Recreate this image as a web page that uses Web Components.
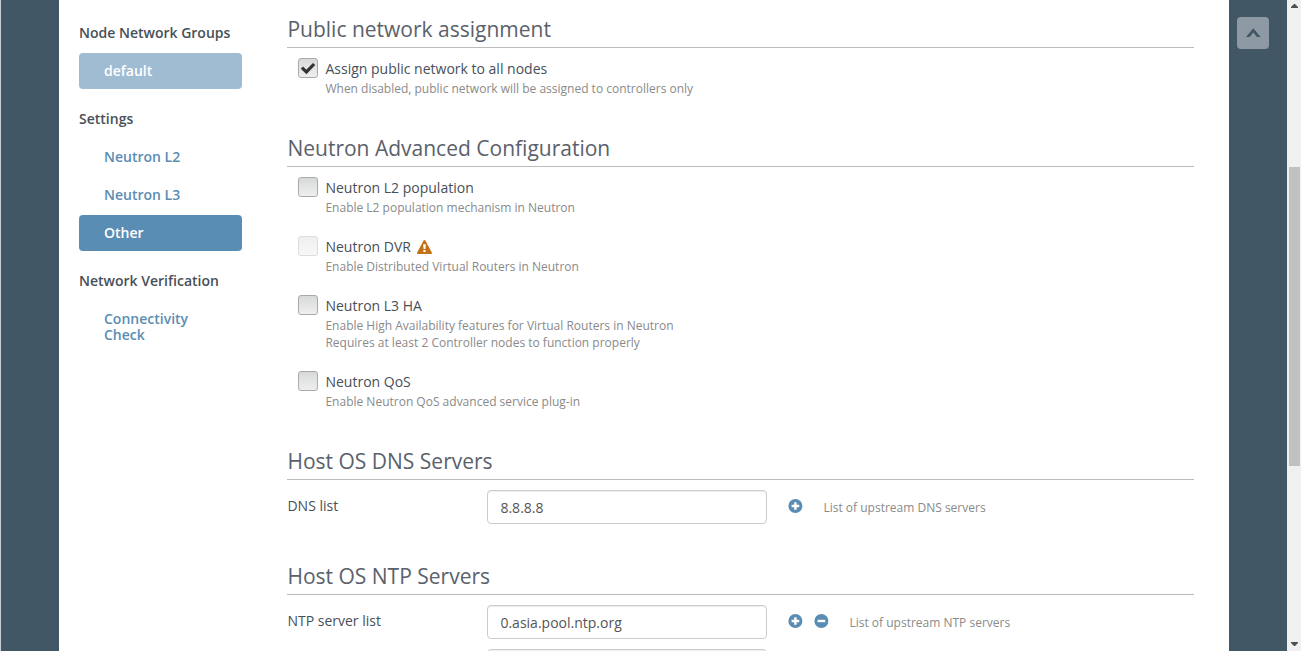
<!DOCTYPE html>
<html lang="en">
<head>
<meta charset="utf-8">
<title>Network settings</title>
<style>
html, body { margin: 0; height: 100%; overflow: hidden; background: #fff; }
body { font: 14px/20px "Open Sans", sans-serif; color: #415766; }
</style>
</head>
<body>
<app-shell>
  <side-nav slot="nav">
    <nav-group label="Node Network Groups"><nav-link state="soft">default</nav-link></nav-group>
    <nav-group label="Settings"><nav-link>Neutron L2</nav-link><nav-link>Neutron L3</nav-link><nav-link state="active">Other</nav-link></nav-group>
    <nav-group label="Network Verification"><nav-link>Connectivity Check</nav-link></nav-group>
  </side-nav>
  <settings-section label="Public network assignment">
    <check-item checked label="Assign public network to all nodes">When disabled, public network will be assigned to controllers only</check-item>
  </settings-section>
  <settings-section label="Neutron Advanced Configuration">
    <check-item label="Neutron L2 population">Enable L2 population mechanism in Neutron</check-item>
    <check-item disabled warning label="Neutron DVR">Enable Distributed Virtual Routers in Neutron</check-item>
    <check-item label="Neutron L3 HA">Enable High Availability features for Virtual Routers in Neutron<br>Requires at least 2 Controller nodes to function properly</check-item>
    <check-item label="Neutron QoS">Enable Neutron QoS advanced service plug-in</check-item>
  </settings-section>
  <settings-section label="Host OS DNS Servers">
    <field-row label="DNS list" value="8.8.8.8"><round-icon slot="icons" kind="plus"></round-icon>List of upstream DNS servers</field-row>
  </settings-section>
  <settings-section label="Host OS NTP Servers">
    <field-row class="tight" label="NTP server list" value="0.asia.pool.ntp.org"><round-icon slot="icons" kind="plus"></round-icon><round-icon slot="icons" kind="minus"></round-icon>List of upstream NTP servers</field-row>
    <field-row label="" value=""></field-row>
  </settings-section>
  <to-top slot="right"></to-top>
  <scroll-rail slot="rail"></scroll-rail>
</app-shell>
<script>
function define(name, render) {
  customElements.define(name, class extends HTMLElement {
    constructor() {
      super();
      this.attachShadow({ mode: 'open' }).innerHTML = render(this);
    }
  });
}

define('app-shell', () => `
<style>
:host { display: grid; grid-template-columns: 59px 1170px 58px 14px; height: 651px; overflow: hidden; background: #415766; }
.left { border-left: 1px solid #c9cdd0; }
.page { background: #fff; display: grid; grid-template-columns: 163px 907px; column-gap: 45.45px; padding-left: 20px; height: 651px; overflow: hidden; box-sizing: border-box; align-items: start; }
.main { margin-top: -2px; }
</style>
<div class="left"></div>
<div class="page"><slot name="nav"></slot><div class="main"><slot></slot></div></div>
<slot name="right"></slot><slot name="rail"></slot>`);

define('side-nav', () => `
<style>:host { display: flex; flex-direction: column; gap: 20px; padding-top: 23px; }</style><slot></slot>`);

define('nav-group', el => `
<style>
:host { display: block; font-weight: 600; }
.t { color: #474f58; line-height: 20px; margin-bottom: 10px; }
.links { display: flex; flex-direction: column; gap: 2px; }
</style>
<div class="t">${el.getAttribute('label')}</div><div class="links"><slot></slot></div>`);

define('nav-link', () => `
<style>
:host { display: block; box-sizing: border-box; min-height: 36px; padding: 10px 25px; line-height: 16px; border-radius: 4px; color: #5a8db4; font-weight: 600; }
:host([state=soft]) { background: #a0bcd2; color: #fff; }
:host([state=active]) { background: #5a8db4; color: #fff; }
</style><slot></slot>`);

define('settings-section', el => `
<style>
:host { display: block; }
h3 { margin: 0 0 10px; height: 31px; border-bottom: 1px solid #bcbcbc; font-weight: 400; font-size: 21px; line-height: 26px; padding-top: 18px; color: #5a616b; }
</style><h3>${el.getAttribute('label')}</h3><slot></slot>`);

define('check-item', el => `
<style>
:host { display: grid; grid-template-columns: 20px 1fr; column-gap: 7px; margin-left: 11px; padding-bottom: 20px; }
.box { width: 18px; height: 18px; border: 1px solid #aaa; border-radius: 3px; background: linear-gradient(#d7d9d9, #efefef); }
:host([disabled]) .box { border-color: #ddd; background: linear-gradient(#efefef, #f8f8f8); }
.box svg { display: block; }
.t { line-height: 22px; height: 22px; display: flex; align-items: center; gap: 6px; color: #474f58; }
.d { font-size: 12px; line-height: 17px; color: #8a8a8a; }
</style>
<div class="box">${el.hasAttribute('checked') ? '<svg width="18" height="18"><path d="M2.9 8.6L7.4 12.9L15.1 5" fill="none" stroke="#333" stroke-width="3.2"/></svg>' : ''}</div>
<div><div class="t"><span>${el.getAttribute('label')}</span>${el.hasAttribute('warning') ? '<svg width="15" height="14" viewBox="0 0 15 14"><path d="M7.5 0Q8 0 8.4.6L14.8 12.5Q15.2 14 14 14H1Q-.2 14 .2 12.5L6.6.6Q7 0 7.5 0Z" fill="#c17116"/><path d="M6.1 4.2H8.9L8.4 9H6.6ZM6.4 10H8.6V12.1H6.4Z" fill="#fff"/></svg>' : ''}</div>
<div class="d"><slot></slot></div></div>`);

define('field-row', el => `
<style>
:host { display: grid; grid-template-columns: 200px 280px auto 1fr; height: 34px; margin-bottom: 21px; color: #474f58; }
:host(.tight) { margin-bottom: 10px; }
.l { line-height: 20px; padding-top: 6px; }
.i { box-sizing: border-box; height: 34px; border: 1px solid #ccc; border-radius: 4px; padding: 7px 12px 0; line-height: 20px; color: #555; box-shadow: inset 0 1px 1px rgba(0,0,0,.075); }
.b { display: flex; gap: 12px; padding: 9px 21px 0; align-items: flex-start; }
.d { font-size: 12px; line-height: 17px; padding-top: 9px; color: #8a8a8a; }
</style>
<div class="l">${el.getAttribute('label')}</div><div class="i" role="textbox">${el.getAttribute('value')}</div>
<div class="b"><slot name="icons"></slot></div><div class="d"><slot></slot></div>`);

define('round-icon', el => `
<style>:host { display: block; width: 14px; height: 14px; } svg { display: block; overflow: visible; }</style>
<svg width="14" height="14"><circle cx="7.4" cy="7" r="7" fill="#5a8db4"/><path d="${el.getAttribute('kind') === 'plus' ? 'M3.6 7H11.2M7.4 3.2V10.8' : 'M3.6 7H11.2'}" stroke="#fff" stroke-width="2.4"/></svg>`);

define('to-top', () => `
<style>
:host { display: block; padding: 17px 0 0 8.4px; }
.b { width: 32px; height: 32px; border-radius: 4px; background: #8d9aa3; }
svg { display: block; }
</style><div class="b"><svg width="32" height="32"><path d="M9 20L16.3 11.3L23.6 20H20L16.3 15.6L12.6 20Z" fill="#415766"/></svg></div>`);

define('scroll-rail', () => `
<style>
:host { display: flex; flex-direction: column; background: #f0f0f0; height: 651px; }
.thumb { width: 11px; height: 299px; margin-left: 2px; background: #c1c1c1; }
.up { height: 167px; } .down { margin-top: auto; height: 13px; }
svg { display: block; }
</style>
<div class="up"><svg width="14" height="14"><path d="M4 8V7L7 4H8L11 7V8Z" fill="#505050"/></svg></div><div class="thumb"></div>
<div class="down"><svg width="14" height="13"><path d="M4 4V5L7 8H8L11 5V4Z" fill="#505050"/></svg></div>`);
</script>
</body>
</html>
